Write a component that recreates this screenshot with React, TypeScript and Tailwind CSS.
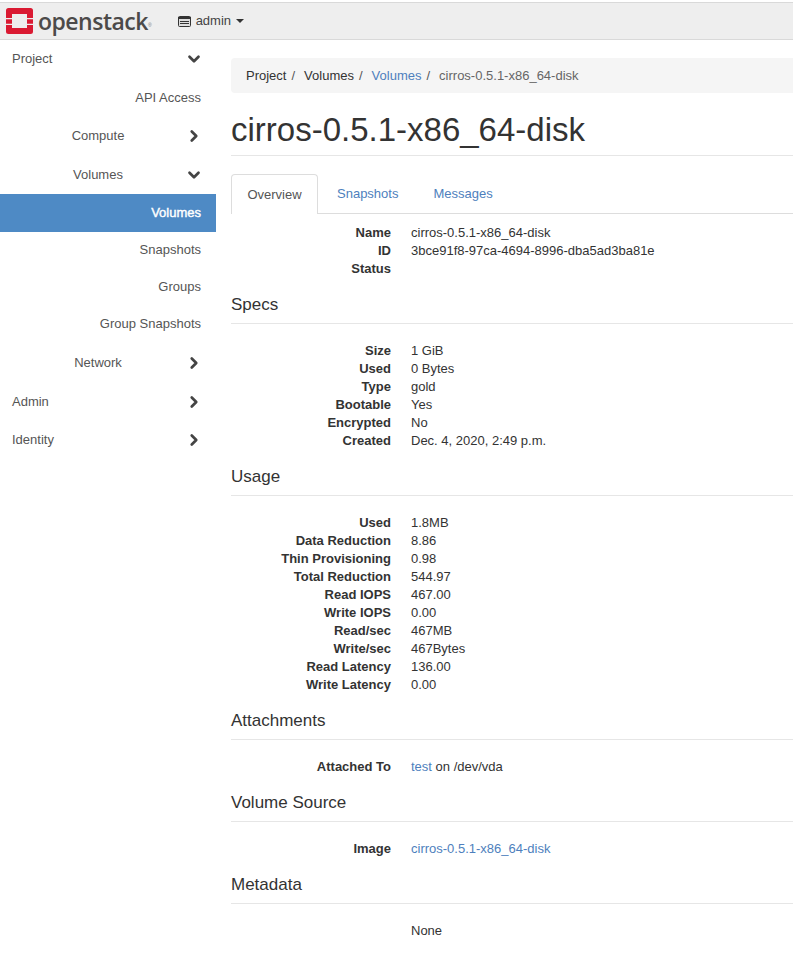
import React from 'react';
import { ChevronDown, ChevronRight } from 'lucide-react';

const font = "font-['Liberation_Sans',Arial,sans-serif]";

const Logo = () => (
  <svg width="27" height="26" viewBox="0 0 27 26" className="shrink-0">
    <path fill="#da1a32" d="M2.5 0h22A2.5 2.5 0 0 1 27 2.5V10h-6V6H6v4H0V2.5A2.5 2.5 0 0 1 2.5 0z" />
    <path fill="#da1a32" d="M0 11.2h6v4.6H0zM21 11.2h6v4.6h-6z" />
    <path fill="#da1a32" d="M0 17h6v3h15v-3h6v6.5a2.5 2.5 0 0 1-2.5 2.5h-22A2.5 2.5 0 0 1 0 23.5z" />
  </svg>
);

const NavRow = ({ label, open, center, h = 'h-[38px]' }: { label: string; open?: boolean; center?: boolean; h?: string }) => (
  <div className={`flex items-center ${h} pl-3 pr-[13px] text-[#555]`}>
    <span className={center ? 'w-[172px] text-center' : 'w-[172px]'}>{label}</span>
    <span className="ml-auto text-[#444]">
      {open ? <ChevronDown size={18} strokeWidth={3.6} /> : <ChevronRight size={18} strokeWidth={3.6} />}
    </span>
  </div>
);

const SubRow = ({ label, active, h = 'h-[37px]' }: { label: string; active?: boolean; h?: string }) => (
  <div className={`flex items-center justify-end ${h} pr-[15px] ${active ? 'bg-[#4e8ac5] text-white [-webkit-text-stroke:0.4px_white]' : 'text-[#555]'}`}>
    {label}
  </div>
);

const Section = ({ title }: { title: string }) => (
  <h2 className="mt-[17px] h-[29px] border-b border-[#e6e6e6] pb-[8px] text-[17px] leading-[20px] text-[#333]">{title}</h2>
);

const Rows = ({ items }: { items: [string, React.ReactNode][] }) => (
  <dl className="grid grid-cols-[160px_1fr] gap-x-5 text-[#333]">
    {items.map(([k, v], i) => (
      <React.Fragment key={i}>
        <dt className="h-[18px] text-right font-bold leading-[18px]">{k}</dt>
        <dd className="h-[18px] leading-[18px]">{v}</dd>
      </React.Fragment>
    ))}
  </dl>
);

const link = 'text-[#4e7fbd]';
const slash = 'ml-[5px] mr-[9px] text-[#555]';

export default function App() {
  return (
    <div className={`${font} min-h-[953px] overflow-hidden bg-white text-[13px] leading-[20px]`}>
      <header className="mt-[2px] flex h-[38px] items-center border-y border-[#d9d9d9] bg-[#eeeeee] pl-[6px]">
        <Logo />
        <span className="ml-[5px] font-['Open_Sans',sans-serif] text-[23px] font-semibold leading-none tracking-[-0.5px] text-[#4c4a49]">openstack</span>
        <span className="mb-[-8px] text-[5px] leading-none text-[#777]">®</span>
        <span className="ml-[26px] flex items-center text-[#444]">
          <svg width="13" height="11" viewBox="0 0 13 11" className="mr-[5px]">
            <rect x="0.5" y="0.5" width="12" height="10" rx="1" fill="#ddd" stroke="#333" />
            <path d="M0 1h13v2H0zM2 5h9v1H2zM2 7h9v1H2z" fill="#333" />
          </svg>
          admin
          <span className="ml-[5px] h-0 w-0 border-x-[4px] border-t-[4px] border-x-transparent border-t-[#333]" />
        </span>
      </header>
      <div className="flex">
        <aside className="w-[216px] shrink-0">
          <NavRow label="Project" open />
          <SubRow label="API Access" h="h-[39px]" />
          <NavRow label="Compute" center />
          <NavRow label="Volumes" open center h="h-[39px]" />
          <SubRow label="Volumes" active h="h-[38px]" />
          <SubRow label="Snapshots" h="h-[35px]" />
          <SubRow label="Groups" h="h-[39px]" />
          <SubRow label="Group Snapshots" h="h-[36px]" />
          <NavRow label="Network" center h="h-[41px]" />
          <NavRow label="Admin" />
          <NavRow label="Identity" />
        </aside>
        <main className="min-w-0 flex-1 pl-[15px] text-[#333]">
          <nav className="mt-[18px] flex h-[35px] items-center rounded-l bg-[#f5f5f5] pl-[15px]">
            <span>Project</span><span className={slash}>/</span>
            <span>Volumes</span><span className={slash}>/</span>
            <span className={link}>Volumes</span><span className={slash}>/</span>
            <span className="text-[#666]">cirros-0.5.1-x86_64-disk</span>
          </nav>
          <h1 className="h-[63px] border-b border-[#e6e6e6] pt-[18px] text-[33px] leading-[37px] text-[#333]">cirros-0.5.1-x86_64-disk</h1>
          <div className="mt-[18px] flex h-[40px] border-b border-[#dddddd]">
            <div className="mb-[-1px] flex w-[87px] items-center justify-center rounded-t border border-b-0 border-[#dddddd] bg-white text-[#555]">Overview</div>
            <div className={`flex items-center pl-[19px] ${link}`}>Snapshots</div>
            <div className={`flex items-center pl-[35px] ${link}`}>Messages</div>
          </div>
          <div className="mt-[10px]">
            <Rows items={[['Name', 'cirros-0.5.1-x86_64-disk'], ['ID', '3bce91f8-97ca-4694-8996-dba5ad3ba81e'], ['Status', '']]} />
          </div>
          <Section title="Specs" />
          <div className="mt-[18px]">
            <Rows items={[['Size', '1 GiB'], ['Used', '0 Bytes'], ['Type', 'gold'], ['Bootable', 'Yes'], ['Encrypted', 'No'], ['Created', 'Dec. 4, 2020, 2:49 p.m.']]} />
          </div>
          <Section title="Usage" />
          <div className="mt-[18px]">
            <Rows items={[['Used', '1.8MB'], ['Data Reduction', '8.86'], ['Thin Provisioning', '0.98'], ['Total Reduction', '544.97'], ['Read IOPS', '467.00'], ['Write IOPS', '0.00'], ['Read/sec', '467MB'], ['Write/sec', '467Bytes'], ['Read Latency', '136.00'], ['Write Latency', '0.00']]} />
          </div>
          <Section title="Attachments" />
          <div className="mt-[18px]">
            <Rows items={[['Attached To', <><span className={link}>test</span> on /dev/vda</>]]} />
          </div>
          <Section title="Volume Source" />
          <div className="mt-[18px]">
            <Rows items={[['Image', <span className={link}>cirros-0.5.1-x86_64-disk</span>]]} />
          </div>
          <Section title="Metadata" />
          <div className="mt-[18px]">
            <Rows items={[['', 'None']]} />
          </div>
        </main>
      </div>
    </div>
  );
}
